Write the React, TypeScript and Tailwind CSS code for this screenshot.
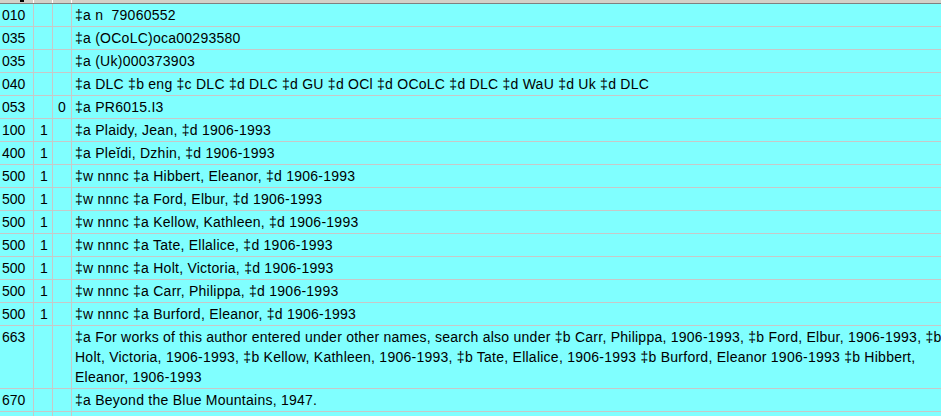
import React from "react";

type Row = { tag: string; i1: string; i2: string; lines: string[] };

const rows: Row[] = [
  { tag: "010", i1: "", i2: "", lines: ["‡a n  79060552"] },
  { tag: "035", i1: "", i2: "", lines: ["‡a (OCoLC)oca00293580"] },
  { tag: "035", i1: "", i2: "", lines: ["‡a (Uk)000373903"] },
  { tag: "040", i1: "", i2: "", lines: ["‡a DLC ‡b eng ‡c DLC ‡d DLC ‡d GU ‡d OCl ‡d OCoLC ‡d DLC ‡d WaU ‡d Uk ‡d DLC"] },
  { tag: "053", i1: "", i2: "0", lines: ["‡a PR6015.I3"] },
  { tag: "100", i1: "1", i2: "", lines: ["‡a Plaidy, Jean, ‡d 1906-1993"] },
  { tag: "400", i1: "1", i2: "", lines: ["‡a Pleĭdi, Dzhin, ‡d 1906-1993"] },
  { tag: "500", i1: "1", i2: "", lines: ["‡w nnnc ‡a Hibbert, Eleanor, ‡d 1906-1993"] },
  { tag: "500", i1: "1", i2: "", lines: ["‡w nnnc ‡a Ford, Elbur, ‡d 1906-1993"] },
  { tag: "500", i1: "1", i2: "", lines: ["‡w nnnc ‡a Kellow, Kathleen, ‡d 1906-1993"] },
  { tag: "500", i1: "1", i2: "", lines: ["‡w nnnc ‡a Tate, Ellalice, ‡d 1906-1993"] },
  { tag: "500", i1: "1", i2: "", lines: ["‡w nnnc ‡a Holt, Victoria, ‡d 1906-1993"] },
  { tag: "500", i1: "1", i2: "", lines: ["‡w nnnc ‡a Carr, Philippa, ‡d 1906-1993"] },
  { tag: "500", i1: "1", i2: "", lines: ["‡w nnnc ‡a Burford, Eleanor, ‡d 1906-1993"] },
  {
    tag: "663",
    i1: "",
    i2: "",
    lines: [
      "‡a For works of this author entered under other names, search also under ‡b Carr, Philippa, 1906-1993, ‡b Ford, Elbur, 1906-1993, ‡b",
      "Holt, Victoria, 1906-1993, ‡b Kellow, Kathleen, 1906-1993, ‡b Tate, Ellalice, 1906-1993 ‡b Burford, Eleanor 1906-1993 ‡b Hibbert,",
      "Eleanor, 1906-1993",
    ],
  },
  { tag: "670", i1: "", i2: "", lines: ["‡a Beyond the Blue Mountains, 1947."] },
  { tag: "", i1: "", i2: "", lines: [""] },
];

export default function App() {
  return (
    <div
      className="w-[941px] h-[416px] overflow-hidden bg-[#80ffff] text-black text-[14px] leading-[20px]"
      style={{ fontFamily: '"Liberation Sans", Arial, sans-serif' }}
    >
      <div className="relative h-[4px] bg-[#d4d0c8] border-b border-[#808080] flex">
        <div className="w-[34px] h-[3px] border-r border-[#ffffff]" />
        <div className="w-[19px] h-[3px] border-r border-[#ffffff]" />
        <div className="w-[19px] h-[3px] border-r border-[#ffffff]" />
        <div className="absolute left-[20px] top-0 w-[4px] h-[2px] bg-black" />
      </div>
      {rows.map((r, idx) => (
        <div key={idx} className="flex border-b border-[#c8c8c8]">
          <div className="w-[34px] shrink-0 border-r border-[#c8c8c8] pl-[2px] pt-[1px] pb-[1px]">{r.tag}</div>
          <div className="w-[19px] shrink-0 border-r border-[#c8c8c8] pl-[6px] pt-[1px] pb-[1px]">{r.i1}</div>
          <div className="w-[19px] shrink-0 border-r border-[#c8c8c8] pl-[5px] pt-[1px] pb-[1px]">{r.i2}</div>
          <div className="flex-1 min-w-0 pl-[3px] pt-[1px] pb-[1px] whitespace-pre overflow-hidden tracking-[0.25px]">
            {r.lines.map((l, i) => (
              <div key={i} className="h-[20px]">{l}</div>
            ))}
          </div>
        </div>
      ))}
    </div>
  );
}
